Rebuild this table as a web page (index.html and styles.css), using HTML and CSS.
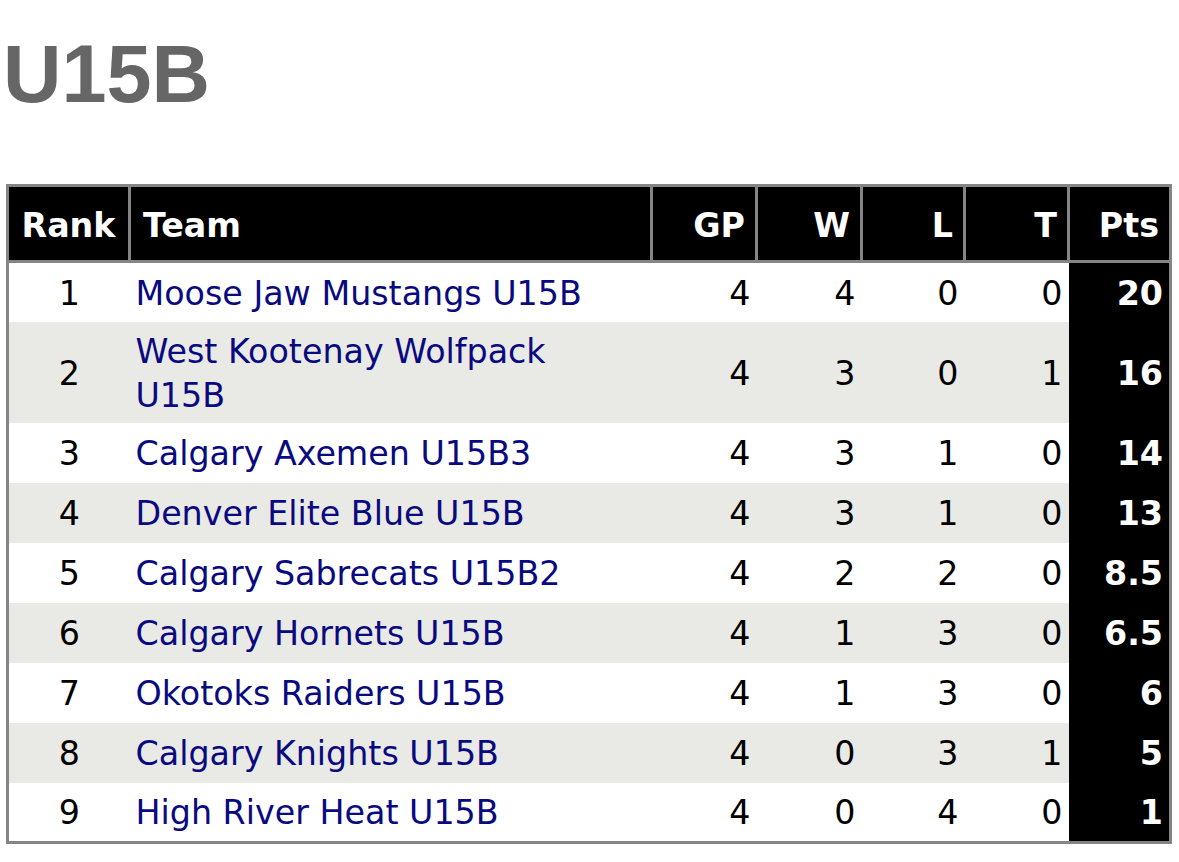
FILE: index.html
```html
<!DOCTYPE html>
<html lang="en">
<head>
<meta charset="utf-8">
<title>U15B Standings</title>
<link rel="stylesheet" href="styles.css">
</head>
<body>
<h1 class="division-title">U15B</h1>
<table class="standings">
  <colgroup>
    <col class="c-rank">
    <col class="c-team">
    <col class="c-gp">
    <col class="c-w">
    <col class="c-l">
    <col class="c-t">
    <col class="c-pts">
  </colgroup>
  <thead>
    <tr>
      <th class="rank">Rank</th>
      <th class="team">Team</th>
      <th class="num">GP</th>
      <th class="num">W</th>
      <th class="num">L</th>
      <th class="num">T</th>
      <th class="num pts">Pts</th>
    </tr>
  </thead>
  <tbody>
    <tr><td class="rank">1</td><td class="team"><a href="#">Moose Jaw Mustangs U15B</a></td><td class="num">4</td><td class="num">4</td><td class="num">0</td><td class="num">0</td><td class="num pts">20</td></tr>
    <tr><td class="rank">2</td><td class="team"><a href="#">West Kootenay Wolfpack U15B</a></td><td class="num">4</td><td class="num">3</td><td class="num">0</td><td class="num">1</td><td class="num pts">16</td></tr>
    <tr><td class="rank">3</td><td class="team"><a href="#">Calgary Axemen U15B3</a></td><td class="num">4</td><td class="num">3</td><td class="num">1</td><td class="num">0</td><td class="num pts">14</td></tr>
    <tr><td class="rank">4</td><td class="team"><a href="#">Denver Elite Blue U15B</a></td><td class="num">4</td><td class="num">3</td><td class="num">1</td><td class="num">0</td><td class="num pts">13</td></tr>
    <tr><td class="rank">5</td><td class="team"><a href="#">Calgary Sabrecats U15B2</a></td><td class="num">4</td><td class="num">2</td><td class="num">2</td><td class="num">0</td><td class="num pts">8.5</td></tr>
    <tr><td class="rank">6</td><td class="team"><a href="#">Calgary Hornets U15B</a></td><td class="num">4</td><td class="num">1</td><td class="num">3</td><td class="num">0</td><td class="num pts">6.5</td></tr>
    <tr><td class="rank">7</td><td class="team"><a href="#">Okotoks Raiders U15B</a></td><td class="num">4</td><td class="num">1</td><td class="num">3</td><td class="num">0</td><td class="num pts">6</td></tr>
    <tr><td class="rank">8</td><td class="team"><a href="#">Calgary Knights U15B</a></td><td class="num">4</td><td class="num">0</td><td class="num">3</td><td class="num">1</td><td class="num pts">5</td></tr>
    <tr><td class="rank">9</td><td class="team"><a href="#">High River Heat U15B</a></td><td class="num">4</td><td class="num">0</td><td class="num">4</td><td class="num">0</td><td class="num pts">1</td></tr>
  </tbody>
</table>
</body>
</html>
```

FILE: styles.css
```css
html, body {
  margin: 0;
  padding: 0;
  background: #ffffff;
}

.division-title {
  margin: 28px 0 0 0;
  padding-left: 3px;
  font-family: "Liberation Sans", Arial, sans-serif;
  font-weight: bold;
  font-size: 81px;
  line-height: 93px;
  color: #666666;
}

.standings {
  margin: 63px 0 0 6px;
  border-collapse: collapse;
  table-layout: fixed;
  width: 1166px;
  border: 3px solid #858585;
  font-family: "DejaVu Sans", Verdana, sans-serif;
  font-size: 33.3px;
  line-height: 44px;
  color: #000000;
}

.c-rank { width: 122px; }
.c-team { width: 522px; }
.c-gp { width: 105px; }
.c-w { width: 105px; }
.c-l { width: 103px; }
.c-t { width: 104px; }
.c-pts { width: 102px; }

.standings th {
  background: #000000;
  color: #ffffff;
  font-weight: bold;
  padding: 17px 10px 12px 10px;
  border: 3px solid #858585;
  white-space: nowrap;
}

.standings tbody tr {
  height: 60px;
}

.standings tbody tr:nth-child(even) td {
  background: #e9e9e6;
}

.standings td {
  padding: 8px 6px 5px 6px;
  vertical-align: middle;
  border: none;
}

.standings .rank { text-align: center; }
.standings .team { text-align: left; padding-right: 14px; }
.standings .num { text-align: right; }

.standings th.team { padding-left: 12px; }

.standings td.pts,
.standings tbody tr:nth-child(even) td.pts {
  background: #000000;
  color: #ffffff;
  font-weight: bold;
}

.standings td.team a {
  color: #0a0a80;
  text-decoration: none;
}
```
